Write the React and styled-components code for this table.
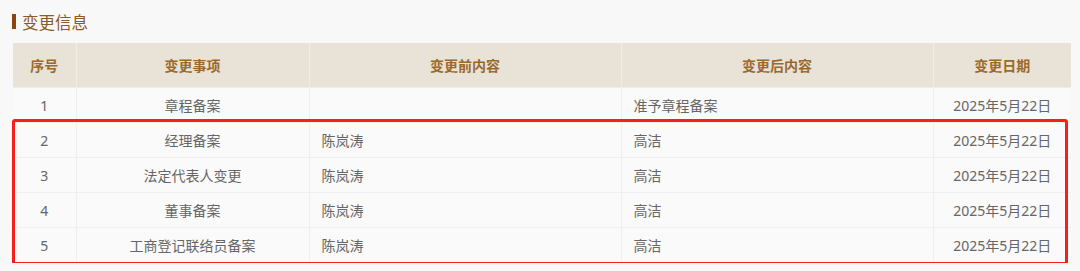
import React from "react";
import styled, { createGlobalStyle } from "styled-components";

const Global = createGlobalStyle`
  html, body { margin: 0; padding: 0; background: #f8f8f8; }
  body { font-family: "Noto Sans", "Noto Sans CJK SC", sans-serif; }
`;

const Page = styled.div`
  padding: 10px 9px 0 13px;
  width: 1058px;
`;

const Title = styled.h2`
  display: flex;
  align-items: center;
  gap: 6px;
  margin: 0 0 10px -1px;
  height: 23px;
  font-size: 16.5px;
  font-weight: 400;
  color: #8b5a2b;
  font-family: "Noto Sans CJK SC", sans-serif;
  &::before {
    content: "";
    width: 4px;
    height: 15px;
    background: #8b4513;
  }
`;

const TableWrap = styled.div`
  position: relative;
`;

const Table = styled.table`
  width: 1058px;
  border-collapse: collapse;
  table-layout: fixed;
  font-size: 14px;
  font-family: "Noto Sans", "Noto Sans CJK SC", sans-serif;
`;

const Th = styled.th`
  height: 44px;
  padding: 0;
  background: #e9e2d6;
  color: #9b6a2b;
  font-weight: 700;
  text-align: center;
  border-right: 1px solid #f1ece4;
  border-bottom: 1px solid #f1ece4;
  &:last-child { border-right: none; }
`;

const Td = styled.td`
  height: 34px;
  padding: 0 ${(p) => (p.$left ? "12px" : "0")};
  background: #fafafa;
  color: #666;
  text-align: ${(p) => (p.$left ? "left" : "center")};
  border-right: 1px solid #efefef;
  border-bottom: 1px solid #efefef;
  white-space: nowrap;
  &:last-child { border-right: none; }
`;

const Highlight = styled.div`
  position: absolute;
  left: -1px;
  top: 76px;
  width: 1056px;
  height: 146px;
  box-sizing: border-box;
  border: 3px solid #f71e1c;
  border-radius: 3px;
  pointer-events: none;
`;

const cols = [63, 233, 312, 312, 138];
const headers = ["序号", "变更事项", "变更前内容", "变更后内容", "变更日期"];
const rows = [
  ["1", "章程备案", "", "准予章程备案", "2025年5月22日"],
  ["2", "经理备案", "陈岚涛", "高洁", "2025年5月22日"],
  ["3", "法定代表人变更", "陈岚涛", "高洁", "2025年5月22日"],
  ["4", "董事备案", "陈岚涛", "高洁", "2025年5月22日"],
  ["5", "工商登记联络员备案", "陈岚涛", "高洁", "2025年5月22日"],
];

export default function App() {
  return (
    <>
      <Global />
      <Page>
        <Title>变更信息</Title>
        <TableWrap>
          <Table>
            <colgroup>
              {cols.map((w, i) => (
                <col key={i} style={{ width: w }} />
              ))}
            </colgroup>
            <thead>
              <tr>
                {headers.map((h) => (
                  <Th key={h}>{h}</Th>
                ))}
              </tr>
            </thead>
            <tbody>
              {rows.map((r) => (
                <tr key={r[0]}>
                  <Td>{r[0]}</Td>
                  <Td>{r[1]}</Td>
                  <Td $left>{r[2]}</Td>
                  <Td $left>{r[3]}</Td>
                  <Td>{r[4]}</Td>
                </tr>
              ))}
            </tbody>
          </Table>
          <Highlight />
        </TableWrap>
      </Page>
    </>
  );
}
